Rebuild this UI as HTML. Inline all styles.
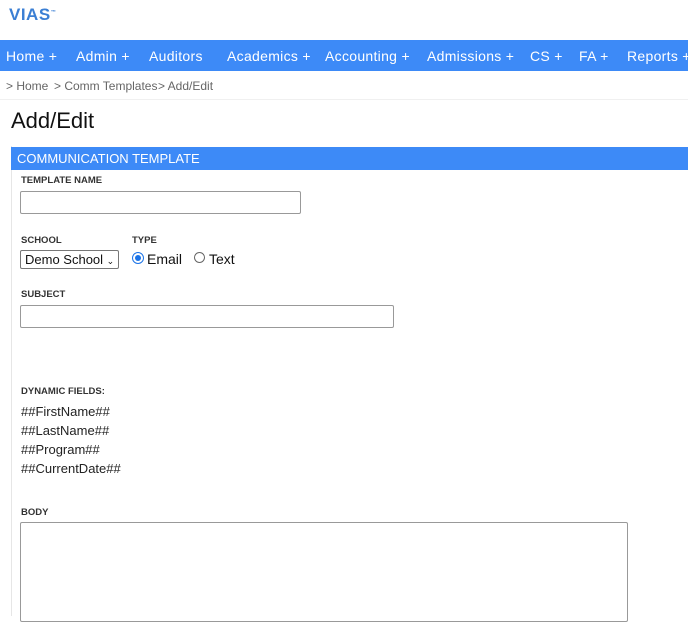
<!DOCTYPE html>
<html><head><style>
*{box-sizing:border-box;margin:0;padding:0}
body{width:688px;height:606px;overflow:hidden;background:#fff;font-family:"Liberation Sans",Arial,sans-serif;position:relative}
.abs{position:absolute;white-space:nowrap}
.logo{left:9px;top:5px;font-size:17px;font-weight:bold;color:#3b7fd4;letter-spacing:0.5px}
.nav{left:0;top:40px;width:688px;height:31px;background:#3d8af7}
.nav span{position:absolute;top:8px;color:#fff;font-size:14px;letter-spacing:0.3px}
.bc{top:79px;font-size:12px;color:#666}
h1{position:absolute;left:11px;top:108px;font-size:22px;font-weight:normal;color:#111}
.panel{left:11px;top:146px;width:677px;height:470px;border-left:1px solid #e6e6e6}
.ph{left:11px;top:147px;width:677px;height:23px;background:#3d8af7;color:#fff;font-size:13px;padding:4px 0 0 6px}
.lbl{font-size:9.5px;font-weight:bold;color:#333}
.inp{position:absolute;border:1px solid #999;border-radius:2px;background:#fff}
.t{font-size:13px;color:#222}
</style></head><body>
<div class="abs logo">VIAS<sup style="font-size:5px">™</sup></div>
<div class="abs nav">
<span style="left:6px">Home +</span><span style="left:76px">Admin +</span><span style="left:149px">Auditors</span><span style="left:227px">Academics +</span><span style="left:325px">Accounting +</span><span style="left:427px">Admissions +</span><span style="left:530px">CS +</span><span style="left:579px">FA +</span><span style="left:627px">Reports +</span>
</div>
<div class="abs bc" style="left:6px">&gt; Home</div>
<div class="abs bc" style="left:54px">&gt; Comm Templates</div>
<div class="abs bc" style="left:158px">&gt; Add/Edit</div>
<div style="position:absolute;left:0;top:99px;width:688px;height:1px;background:#f0f0f0"></div>
<h1>Add/Edit</h1>
<div class="abs panel"></div>
<div class="abs ph">COMMUNICATION TEMPLATE</div>
<div class="abs lbl" style="left:21px;top:175px">TEMPLATE NAME</div>
<div class="inp" style="left:20px;top:191px;width:281px;height:23px"></div>
<div class="abs lbl" style="left:21px;top:235px">SCHOOL</div>
<div class="abs lbl" style="left:132px;top:235px">TYPE</div>
<div class="inp" style="left:20px;top:250px;width:99px;height:19px;border-color:#777;font-size:13px;padding:1px 0 0 4px;color:#111">Demo School <span style="font-size:9px">&#8964;</span></div>
<div class="abs" style="left:132px;top:252px;width:12px;height:12px;border-radius:50%;border:1px solid #1a73e8;background:#fff"><div style="margin:2px;width:6px;height:6px;border-radius:50%;background:#1a73e8"></div></div>
<div class="abs" style="left:147px;top:251px;font-size:14px;color:#111">Email</div>
<div class="abs" style="left:194px;top:252px;width:11px;height:11px;border-radius:50%;border:1px solid #666"></div>
<div class="abs" style="left:209px;top:251px;font-size:14px;color:#111">Text</div>
<div class="abs lbl" style="left:21px;top:289px">SUBJECT</div>
<div class="inp" style="left:20px;top:305px;width:374px;height:23px"></div>
<div class="abs lbl" style="left:21px;top:386px">DYNAMIC FIELDS:</div>
<div class="abs t" style="left:21px;top:404px">##FirstName##</div>
<div class="abs t" style="left:21px;top:423px">##LastName##</div>
<div class="abs t" style="left:21px;top:442px">##Program##</div>
<div class="abs t" style="left:21px;top:461px">##CurrentDate##</div>
<div class="abs lbl" style="left:21px;top:507px">BODY</div>
<div class="inp" style="left:20px;top:522px;width:608px;height:100px"></div>
</body></html>
